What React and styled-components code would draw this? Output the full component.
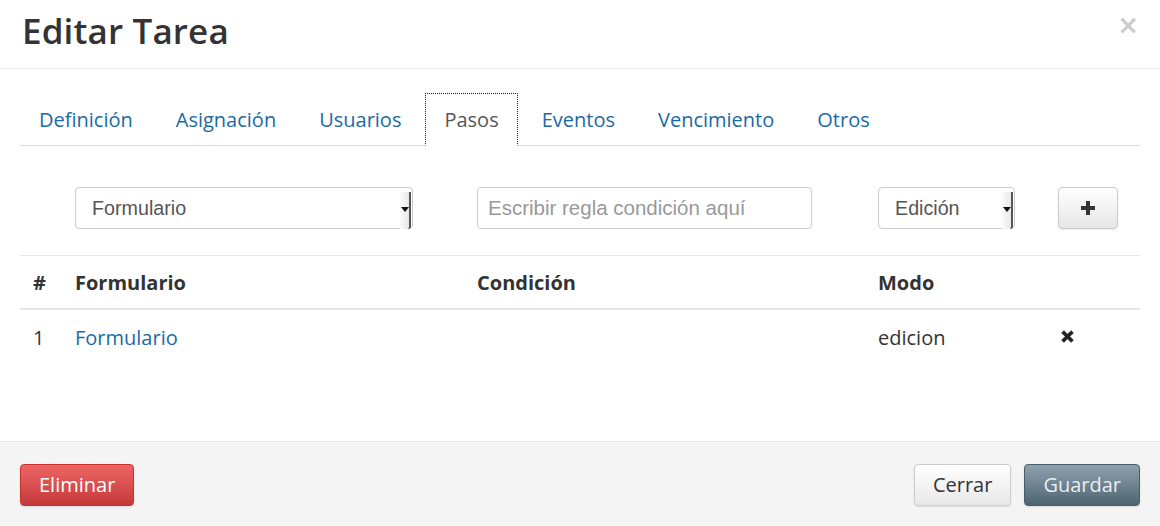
import styled, { createGlobalStyle } from 'styled-components';

const GlobalStyle = createGlobalStyle`
	html, body {
		margin: 0;
		padding: 0;
		background: #fff;
	}
	body {
		font-family: 'Open Sans', 'DejaVu Sans', sans-serif;
		color: #333;
	}
	* {
		box-sizing: border-box;
	}
`;

const tabs = ['Definición', 'Asignación', 'Usuarios', 'Pasos', 'Eventos', 'Vencimiento', 'Otros'];

const steps = [{ id: 1, form: 'Formulario', condition: '', mode: 'edicion' }];

const Select = ({ value, width }) => (
	<SelectBox $width={width}>
		<span>{value}</span>
		<SelectArrow />
	</SelectBox>
);

const App = () => {
	return (
		<>
			<GlobalStyle />
			<Modal>
				<Header>
					<Title>Editar Tarea</Title>
					<CloseButton aria-label='cerrar'>×</CloseButton>
				</Header>
				<Body>
					<Tabs>
						{tabs.map((t) => (
							<Tab key={t} $active={t === 'Pasos'}>
								{t}
							</Tab>
						))}
					</Tabs>
					<FormRow>
						<span />
						<Select value='Formulario' width={338} />
						<Input placeholder='Escribir regla condición aquí' />
						<Select value='Edición' width={137} />
						<AddButton aria-label='agregar'>
							<svg width='16' height='16' viewBox='0 0 16 16'>
								<path d='M6 1h4v5h5v4h-5v5H6v-5H1V6h5z' fill='#333' />
							</svg>
						</AddButton>
					</FormRow>
					<HeadRow>
						<Cell $first>#</Cell>
						<Cell>Formulario</Cell>
						<Cell>Condición</Cell>
						<Cell>Modo</Cell>
						<Cell />
					</HeadRow>
					{steps.map((s) => (
						<BodyRow key={s.id}>
							<Cell $first>{s.id}</Cell>
							<Cell>
								<Link href='#'>{s.form}</Link>
							</Cell>
							<Cell>{s.condition}</Cell>
							<Cell>{s.mode}</Cell>
							<Cell>
								<RemoveIcon viewBox='0 0 16 16'>
									<path
										d='M2.5 4.6 4.6 2.5 8 5.9l3.4-3.4 2.1 2.1L10.1 8l3.4 3.4-2.1 2.1L8 10.1l-3.4 3.4-2.1-2.1L5.9 8z'
										fill='#222'
										stroke='#222'
										strokeWidth='0.8'
										strokeLinejoin='round'
									/>
								</RemoveIcon>
							</Cell>
						</BodyRow>
					))}
				</Body>
				<Footer>
					<Button $variant='danger'>Eliminar</Button>
					<FooterRight>
						<Button>Cerrar</Button>
						<Button $variant='primary'>Guardar</Button>
					</FooterRight>
				</Footer>
			</Modal>
		</>
	);
};
export default App;

const Modal = styled.div`
	width: 1160px;
	height: 526px;
	display: flex;
	flex-direction: column;
	background: #fff;
`;

const Header = styled.div`
	height: 69px;
	border-bottom: 1px solid #eee;
	display: flex;
	align-items: center;
	justify-content: space-between;
	padding: 0 20px 8px 22px;
`;

const Title = styled.h1`
	margin: 0;
	font-size: 35px;
	font-weight: 600;
	color: #333;
	letter-spacing: 0.15px;
`;

const CloseButton = styled.button`
	border: none;
	background: none;
	padding: 0;
	font-family: 'DejaVu Sans', sans-serif;
	font-size: 26px;
	font-weight: bold;
	line-height: 1;
	color: #ccc;
	margin-top: -10px;
	margin-right: 1px;
`;

const Body = styled.div`
	flex: 1;
	padding: 24px 20px 0;
`;

const Tabs = styled.div`
	display: flex;
	height: 53px;
	border-bottom: 1px solid #ddd;
`;

const Tab = styled.a`
	display: flex;
	align-items: center;
	padding: 0 18px 1px;
	margin-right: 5px;
	font-size: 20px;
	color: ${(p) => (p.$active ? '#555' : '#1b6aa5')};
	border: 1px solid transparent;
	margin-bottom: -1px;
	${(p) =>
		p.$active &&
		`
		background: #fff;
		border: 1px dotted #222;
		border-bottom-color: #fff;
	`}
`;

const grid = `
	display: grid;
	grid-template-columns: 55px 402px 401px 180px 82px;
	align-items: center;
`;

const FormRow = styled.div`
	${grid}
	height: 110px;
	padding-top: 14px;
	border-bottom: 1px solid #e5e5e5;
`;

const SelectBox = styled.div`
	position: relative;
	width: ${(p) => p.$width}px;
	height: 42px;
	border: 1px solid #ccc;
	border-radius: 4px;
	background: #fff;
	display: flex;
	align-items: center;
	padding: 1px 16px 0;
	font-family: 'Liberation Sans', Arial, sans-serif;
	font-size: 19.7px;
	color: #555;
`;

const SelectArrow = styled.span`
	position: absolute;
	right: 1px;
	top: 4px;
	bottom: -1px;
	width: 11px;
	background: linear-gradient(to right, #fafafa, #e8e8e8);
	border-right: 2px solid #555;
	border-bottom-right-radius: 3px;
	&::after {
		content: '';
		position: absolute;
		left: 1px;
		top: 15px;
		border-left: 4px solid transparent;
		border-right: 4px solid transparent;
		border-top: 5px solid #111;
	}
`;

const Input = styled.input`
	width: 335px;
	height: 42px;
	border: 1px solid #ccc;
	border-radius: 4px;
	padding: 0 10px;
	font-family: 'Liberation Sans', Arial, sans-serif;
	font-size: 20.5px;
	color: #555;
	outline: none;
	&::placeholder {
		color: #999;
	}
`;

const AddButton = styled.button`
	width: 60px;
	height: 42px;
	border: 1px solid #ccc;
	border-radius: 4px;
	background: linear-gradient(#fff, #e6e6e6);
	box-shadow: 0 1px 2px rgba(0, 0, 0, 0.08);
	display: flex;
	align-items: center;
	justify-content: center;
	padding: 0;
`;

const HeadRow = styled.div`
	${grid}
	height: 54px;
	border-bottom: 2px solid #e5e5e5;
	font-weight: 700;
	font-size: 20px;
	color: #333;
`;

const BodyRow = styled.div`
	${grid}
	height: 54px;
	font-size: 20px;
	color: #333;
`;

const Cell = styled.div`
	padding-left: ${(p) => (p.$first ? '13px' : '0')};
	padding-top: 1px;
	white-space: nowrap;
	display: flex;
	align-items: center;
`;

const Link = styled.a`
	color: #1b6aa5;
	text-decoration: none;
`;

const RemoveIcon = styled.svg`
	width: 17px;
	height: 17px;
	margin-left: 1px;
	margin-top: -2px;
`;

const Footer = styled.div`
	height: 85px;
	border-top: 1px solid #e5e5e5;
	background: #f4f4f4;
	display: flex;
	align-items: center;
	justify-content: space-between;
	padding: 2px 20px 0;
`;

const FooterRight = styled.div`
	display: flex;
	gap: 13px;
`;

const variants = {
	default: `
		color: #333;
		background: linear-gradient(#fff, #e8e8e8);
		border-color: #ccc;
	`,
	danger: `
		color: #fff;
		background: linear-gradient(#ee6565, #c43a3a);
		border-color: #c9302c;
	`,
	primary: `
		color: #e9eef2;
		background: linear-gradient(#8fa1ad, #4e6472);
		border-color: #4a5d6a;
	`,
};

const Button = styled.button`
	height: 42px;
	padding: 0 18px 2px;
	border: 1px solid;
	border-radius: 4px;
	font-family: 'Open Sans', 'DejaVu Sans', sans-serif;
	font-size: 20px;
	box-shadow: 0 1px 2px rgba(0, 0, 0, 0.1);
	${(p) => variants[p.$variant || 'default']}
`;
